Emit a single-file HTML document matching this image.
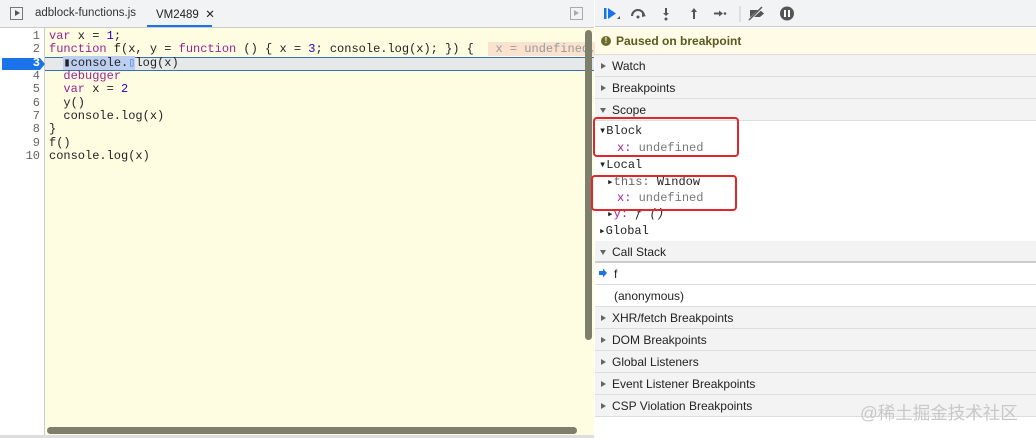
<!DOCTYPE html>
<html><head><meta charset="utf-8"><style>
*{margin:0;padding:0;box-sizing:border-box}
body{width:1036px;height:438px;overflow:hidden;background:#fff;font-family:"Liberation Sans",sans-serif;font-size:12px;color:#222;position:relative}
.abs{position:absolute}
.mono{font-family:"Liberation Mono","DejaVu Sans Mono",monospace}
#left{left:0;top:0;width:594px;height:438px;border-right:1px solid #ccc}
#tabs{left:0;top:0;width:594px;height:28px;background:#f1f3f4;border-bottom:1px solid #ccc}
#gut{left:0;top:28px;width:45px;height:410px;background:#fff;border-right:1px solid #ccc}
#ed{left:45px;top:28px;width:549px;height:410px;background:#fffde1}
.ln{position:absolute;left:0;width:40px;text-align:right;font-size:12px;color:#666;line-height:13px}
.cl{position:absolute;left:49px;font-size:12px;line-height:13px;white-space:pre;color:#222}
.k{color:#9b2393}.n{color:#1c00cf}.v{color:#1a1aa6}
.sec{position:absolute;left:595px;width:441px;height:22px;background:#f3f3f3;border-bottom:1px solid #ddd;font-size:12px;line-height:22px;padding-left:17px;color:#222}
.sec:before{content:"";position:absolute;left:6px;top:8px;border-left:5px solid #666;border-top:3px solid transparent;border-bottom:3px solid transparent}
.sec.o:before{left:5px;top:9px;border-top:5px solid #666;border-left:3px solid transparent;border-right:3px solid transparent;border-bottom:0}
.sr{position:absolute;font-size:12px;line-height:16px;white-space:pre}
.red{position:absolute;border:2px solid #e0272b;border-radius:4px}
</style></head><body>
<div id="left" class="abs">
<div id="tabs" class="abs">
 <div class="abs" style="left:10px;top:7px;width:13px;height:13px;border:1px solid #777;"><div class="abs" style="left:4px;top:2px;border-left:5px solid #555;border-top:3.5px solid transparent;border-bottom:3.5px solid transparent"></div></div>
 <div class="abs" style="left:35px;top:7px;font-size:11.5px;color:#333">adblock-functions.js</div>
 <div class="abs" style="left:156px;top:7px;font-size:11.5px;color:#222">VM2489 &nbsp;✕</div>
 <div class="abs" style="left:147px;top:25px;width:65px;height:2px;background:#1a73e8"></div>
 <div class="abs" style="left:570px;top:7px;width:13px;height:13px;border:1px solid #aaa"><div class="abs" style="left:3px;top:2px;border-left:5px solid #aaa;border-top:3.5px solid transparent;border-bottom:3.5px solid transparent"></div></div>
</div>
<div id="gut" class="abs"></div>
<div id="ed" class="abs"></div>
<div class="abs" style="left:45px;top:57px;width:549px;height:14px;background:#e6e9ea;border-top:1px solid #3a6fb0;border-bottom:1px solid #3a6fb0"></div>
<div class="abs" style="left:2px;top:58px;width:38px;height:12px;background:#1a73e8"></div>
<div class="abs" style="left:40px;top:58px;border-left:5px solid #1a73e8;border-top:6px solid transparent;border-bottom:6px solid transparent"></div>
<div class="abs mono" style="left:0;top:30px;width:594px">
<div class="ln" style="top:0">1</div><div class="ln" style="top:13.3px">2</div><div class="ln" style="top:26.6px;color:#fff;font-weight:bold">3</div><div class="ln" style="top:40px">4</div><div class="ln" style="top:53.3px">5</div><div class="ln" style="top:66.6px">6</div><div class="ln" style="top:80px">7</div><div class="ln" style="top:93.3px">8</div><div class="ln" style="top:106.6px">9</div><div class="ln" style="top:120px">10</div>
<div class="cl" style="top:0"><span class="k">var</span> x = <span class="n">1</span>;</div>
<div class="cl" style="top:13.3px"><span class="k">function</span> f(x, y = <span class="k">function</span> () { x = <span class="n">3</span>; console.log(x); }) {  <span style="background:#f9e3cf;color:#999"> x = undefined,</span></div>
<div class="cl" style="top:26.6px">  <span style="background:#bccff0">▮console.</span><span style="background:#bccff0;color:#4a8af0">▯</span>log(x)</div>
<div class="cl" style="top:40px">  <span class="k">debugger</span></div>
<div class="cl" style="top:53.3px">  <span class="k">var</span> x = <span class="n">2</span></div>
<div class="cl" style="top:66.6px">  y()</div>
<div class="cl" style="top:80px">  console.log(x)</div>
<div class="cl" style="top:93.3px">}</div>
<div class="cl" style="top:106.6px">f()</div>
<div class="cl" style="top:120px">console.log(x)</div>
</div>
<div class="abs" style="left:585px;top:30px;width:7px;height:310px;background:#7e7e6c;border-radius:4px"></div>
</div>
<div class="abs" style="left:47px;top:427px;width:530px;height:7px;background:#7e7e6c;border-radius:4px"></div>
<div class="abs" style="left:0;top:435px;width:594px;height:3px;background:#ddd"></div>

<div class="abs" style="left:595px;top:0;width:441px;height:27px;background:#f1f3f4;border-bottom:1px solid #ccc"></div>
<svg class="abs" style="left:600px;top:4px" width="200" height="20" viewBox="0 0 200 20">
<rect x="4" y="4" width="2.5" height="11" fill="#1a73e8"/><path d="M8 4 L16 9.5 L8 15Z" fill="#1a73e8"/><path d="M17 15 L20 15 L20 12Z" fill="#555"/>
<path d="M32 12 A6 6 0 0 1 44 12" stroke="#555" stroke-width="2" fill="none"/><path d="M42 9 L46 12 L42 13Z" fill="#555"/><circle cx="38" cy="13" r="1.5" fill="#555"/>
<path d="M66 4 V11" stroke="#555" stroke-width="2"/><path d="M63 9 L66 12 L69 9Z" fill="#555"/><circle cx="66" cy="15" r="1.5" fill="#555"/>
<path d="M94 8 V15" stroke="#555" stroke-width="2"/><path d="M91 8 L94 4 L97 8Z" fill="#555"/>
<path d="M114 9.5 H120" stroke="#555" stroke-width="2"/><path d="M119 6.5 L123 9.5 L119 12.5Z" fill="#555"/><circle cx="125" cy="9.5" r="1.3" fill="#555"/>
<line x1="140" y1="2" x2="140" y2="18" stroke="#ccc"/>
<path d="M150 6 H160 L164 9.5 L160 13 H150Z" fill="#555"/><line x1="149" y1="16" x2="163" y2="3" stroke="#f1f3f4" stroke-width="2.5"/><line x1="149" y1="16" x2="162" y2="3" stroke="#555" stroke-width="1.5"/>
<circle cx="187" cy="9.5" r="7" fill="#555"/><rect x="184" y="6" width="2" height="7" fill="#fff"/><rect x="188" y="6" width="2" height="7" fill="#fff"/>
</svg>
<div class="abs" style="left:595px;top:28px;width:441px;height:27px;background:#fffbe6;border-bottom:1px solid #ddd"></div>
<div class="abs" style="left:601px;top:36px;width:10px;height:10px;border-radius:50%;background:#6b6b2a;color:#fffbe6;font-size:8px;font-weight:bold;text-align:center;line-height:10px">!</div>
<div class="abs" style="left:616px;top:34px;font-weight:bold;color:#5a5a1e;font-size:12px">Paused on breakpoint</div>
<div class="sec" style="top:55px">Watch</div>
<div class="sec" style="top:77px">Breakpoints</div>
<div class="sec o" style="top:99px">Scope</div>
<div class="abs mono" style="left:595px;top:122px;width:441px">
<div class="sr" style="left:4px;top:1px">▾<span style="color:#222">Block</span></div>
<div class="sr" style="left:22px;top:18px"><span class="k">x</span><span class="k">:</span> <span style="color:#777">undefined</span></div>
<div class="sr" style="left:4px;top:35px">▾Local</div>
<div class="sr" style="left:12px;top:52px;font-size:11px">▸<span style="font-size:12px;color:#666">this:</span><span style="font-size:12px"> Window</span></div>
<div class="sr" style="left:22px;top:68px"><span class="k">x:</span> <span style="color:#777">undefined</span></div>
<div class="sr" style="left:12px;top:84px;font-size:11px">▸<span class="k" style="font-size:12px">y:</span><span style="font-size:12px;font-style:italic"> ƒ ()</span></div>
<div class="sr" style="left:4px;top:101px;font-size:11px">▸<span style="font-size:12px">Global</span></div>
</div>
<div class="red" style="left:593px;top:117px;width:146px;height:40px"></div>
<div class="red" style="left:591px;top:175px;width:146px;height:36px"></div>
<div class="sec o" style="top:241px;border-bottom:2px solid #ccc">Call Stack</div>
<div class="abs" style="left:595px;top:263px;width:441px;height:22px;border-bottom:1px solid #ddd"></div>
<svg class="abs" style="left:598px;top:268px" width="10" height="10"><path d="M1 3 H5 V0.5 L9 5 L5 9.5 V7 H1Z" fill="#1a73e8"/></svg>
<div class="abs" style="left:614px;top:267px">f</div>
<div class="abs" style="left:595px;top:285px;width:441px;height:22px;border-bottom:1px solid #ddd"></div>
<div class="abs" style="left:614px;top:289px">(anonymous)</div>
<div class="sec" style="top:307px">XHR/fetch Breakpoints</div>
<div class="sec" style="top:329px">DOM Breakpoints</div>
<div class="sec" style="top:351px">Global Listeners</div>
<div class="sec" style="top:373px">Event Listener Breakpoints</div>
<div class="sec" style="top:395px">CSP Violation Breakpoints</div>
<div class="abs" style="left:860px;top:400px;font-size:17.5px;color:#c8c8c8;font-family:'Liberation Sans','Noto Sans CJK SC',sans-serif">@稀土掘金技术社区</div>
</body></html>
